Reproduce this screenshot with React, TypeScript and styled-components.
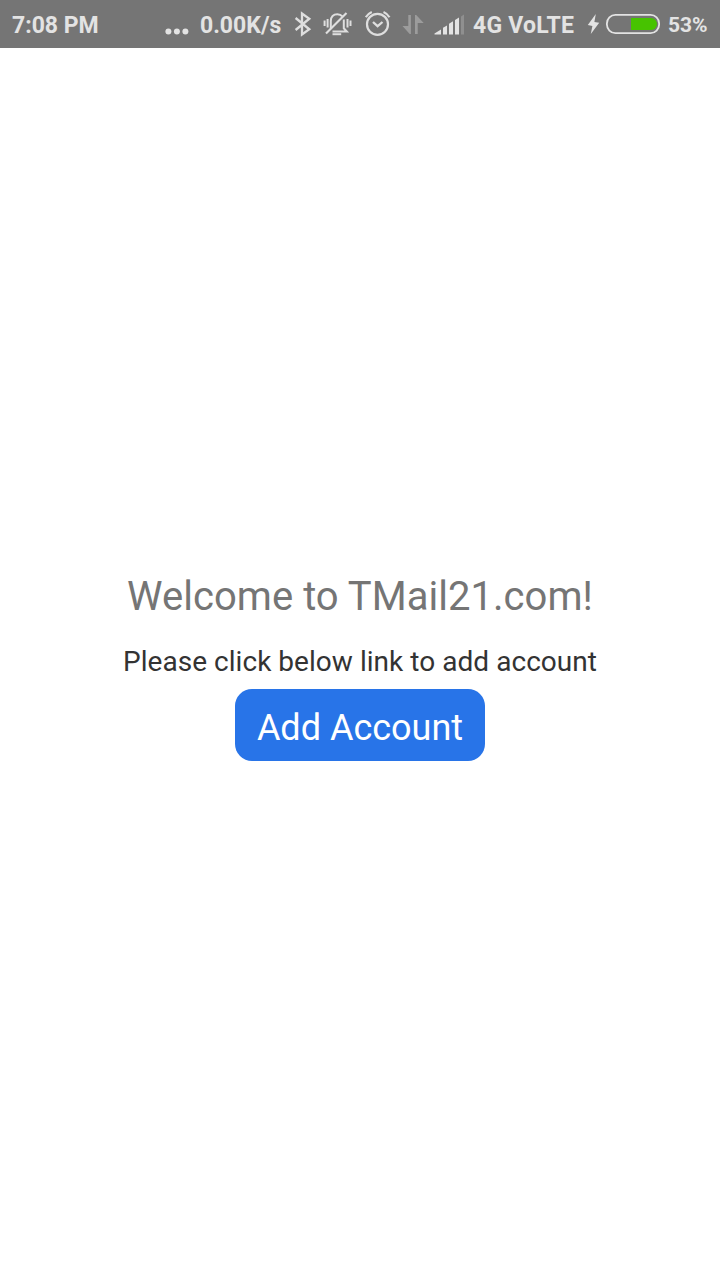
import React from "react";
import styled, { createGlobalStyle } from "styled-components";

const GlobalStyle = createGlobalStyle`
  * { box-sizing: border-box; }
  body {
    margin: 0;
    background: #fff;
    font-family: Roboto, "Noto Sans", sans-serif;
  }
`;

const Screen = styled.div`
  display: flex;
  flex-direction: column;
  width: 720px;
  height: 1280px;
  background: #fff;
`;

const StatusBar = styled.header`
  display: flex;
  align-items: center;
  height: 48px;
  flex: none;
  padding-left: 12px;
  background: #757575;
  color: #e3e3e3;
`;

const StatusText = styled.span<{ $width: number; $gap?: number; $small?: boolean; $tracking?: number }>`
  flex: none;
  width: ${(p) => p.$width}px;
  margin-left: ${(p) => p.$gap ?? 0}px;
  padding-top: ${(p) => (p.$small ? 2 : 4)}px;
  font-size: ${(p) => (p.$small ? 21 : 23)}px;
  line-height: 28px;
  font-weight: 700;
  letter-spacing: ${(p) => p.$tracking ?? 0}px;
  white-space: nowrap;
`;

const StatusIcon = styled.svg<{ $gap: number }>`
  flex: none;
  display: block;
  height: 48px;
  margin-left: ${(p) => p.$gap}px;
  fill: none;
  stroke: #dedede;
  stroke-width: 2;
`;

const Welcome = styled.main`
  flex: 1;
  display: flex;
  flex-direction: column;
  align-items: center;
  padding-top: 525px;
`;

const Title = styled.h1`
  margin: 0;
  font-size: 40px;
  line-height: 48px;
  font-weight: 400;
  letter-spacing: 0.03px;
  color: #757575;
  white-space: nowrap;
`;

const Hint = styled.p`
  margin: 24px 0 0;
  font-size: 28px;
  line-height: 34px;
  letter-spacing: 0.04px;
  color: #333;
  white-space: nowrap;
`;

const AddButton = styled.button`
  width: 250px;
  height: 72px;
  margin-top: 10px;
  padding: 6px 0 0;
  border: 0;
  border-radius: 17px;
  background: #2874e8;
  color: #fff;
  font: 400 36px/44px Roboto, "Noto Sans", sans-serif;
  white-space: nowrap;
`;

const MoreIcon = () => (
  <StatusIcon $gap={65} width="24" viewBox="165 0 24 48">
    <g fill="#e3e3e3" stroke="none">
      <circle cx="168.4" cy="31.6" r="3" />
      <circle cx="176.9" cy="31.6" r="3" />
      <circle cx="185.4" cy="31.6" r="3" />
    </g>
  </StatusIcon>
);

const BluetoothIcon = () => (
  <StatusIcon $gap={11} width="18" viewBox="294 0 18 48">
    <path d="M295.6 18 309.300 29.300 302 34.500V13.500l7.300 5.200-13.700 11.300" strokeWidth="2.300" />
  </StatusIcon>
);

const MutedBellIcon = () => (
  <StatusIcon $gap={11} width="30" viewBox="323 0 30 48">
    <path d="M330.800 28.500V21c0-4.400 2.600-6.800 6.500-6.800 2.200 0 3.900.7 5 2.200M343.800 19.500v8.800l3 3.200H332.500" />
    <path d="M346.500 13 326 33.500" strokeWidth="2.200" />
    <path d="M332.500 34.200h8.700" />
    <path d="M327.600 19v8.500M324.600 20.500v5.500M347.500 19v8.500M350.500 20.500v5.500" />
  </StatusIcon>
);

const AlarmIcon = () => (
  <StatusIcon $gap={12} width="26" viewBox="365 0 26 48">
    <circle cx="377.500" cy="24.300" r="10.500" strokeWidth="2.200" />
    <path d="m373 22 4.600 4.200 4.900-4.200" strokeWidth="2.300" />
    <path d="M365.800 17.300q2-3.700 6-5.400M389.500 17.300q-2-3.700-6-5.400" strokeWidth="2.200" />
  </StatusIcon>
);

const DataIcon = () => (
  <StatusIcon $gap={11} width="22" viewBox="402 0 22 48">
    <path d="M408.300 15h2.600v19h-1.200l-7.200-8h5.800ZM415 34V15h1.200l7.500 8h-6v11Z" fill="#9c9c9c" stroke="none" />
  </StatusIcon>
);

const SignalIcon = () => (
  <StatusIcon $gap={10} width="31" viewBox="434 0 31 48">
    <g fill="#e3e3e3" stroke="none">
      <path d="M434.500 34.500v-1l6.500-4v5ZM443 34.500V27.700l4-2.200v9ZM449 34.500V23.700l4-2.400v13.200ZM455 34.500V20l4-2.500v17Z" />
      <path d="M461 34.500V16.500l3-2v20Z" fill="#8f8f8f" />
    </g>
  </StatusIcon>
);

const ChargingIcon = () => (
  <StatusIcon $gap={12} width="14" viewBox="586 0 14 48">
    <path d="m595.800 14-8 11 4.600 1-1.600 8 8.400-11.300-4.800-.8Z" fill="#e3e3e3" stroke="none" />
  </StatusIcon>
);

const BatteryIcon = () => (
  <StatusIcon $gap={6} width="54" viewBox="606 0 54 48">
    <rect x="606.900" y="14.900" width="52.200" height="18.200" rx="8.500" stroke="#e3e3e3" strokeWidth="1.800" />
    <path d="M631 18h20a6 6 0 0 1 0 12h-20Z" fill="#47c300" stroke="none" />
  </StatusIcon>
);

export default function App() {
  return (
    <Screen>
      <GlobalStyle />
      <StatusBar>
        <StatusText $width={88}>7:08 PM</StatusText>
        <MoreIcon />
        <StatusText $width={83} $gap={11}>0.00K/s</StatusText>
        <BluetoothIcon />
        <MutedBellIcon />
        <AlarmIcon />
        <DataIcon />
        <SignalIcon />
        <StatusText $width={101} $gap={8} $tracking={0.25}>4G VoLTE</StatusText>
        <ChargingIcon />
        <BatteryIcon />
        <StatusText $width={42} $gap={8} $small>53%</StatusText>
      </StatusBar>
      <Welcome>
        <Title>Welcome to TMail21.com!</Title>
        <Hint>Please click below link to add account</Hint>
        <AddButton>Add Account</AddButton>
      </Welcome>
    </Screen>
  );
}
